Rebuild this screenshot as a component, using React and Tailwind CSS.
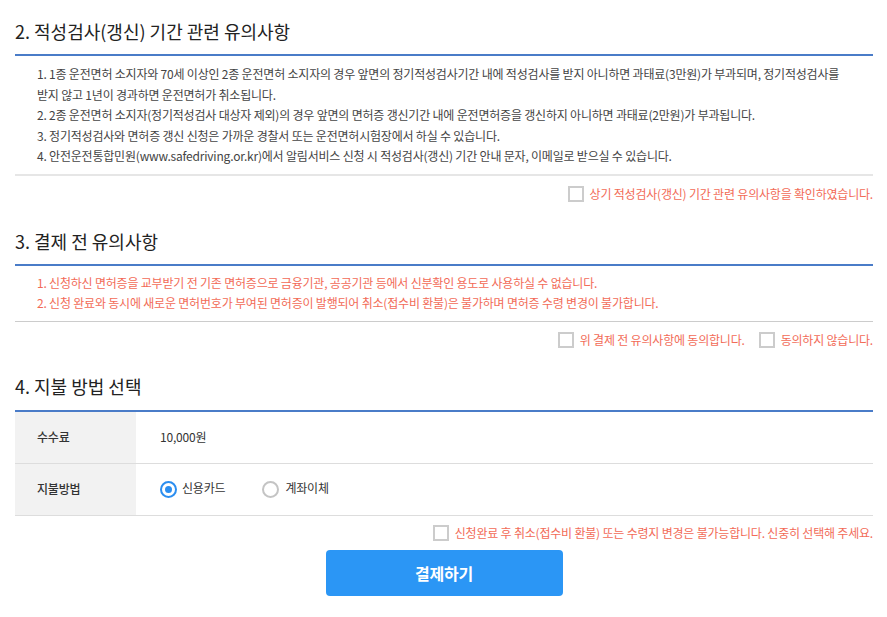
import React from "react";

const font = { fontFamily: '"Noto Sans CJK KR", "Noto Sans", sans-serif' };

function Checkbox() {
  return <span className="inline-block w-[16px] h-[16px] border-2 border-[#cccccc] bg-white shrink-0" />;
}

function Heading({ children, pt, pb }) {
  return (
    <div className={`${pt} ${pb} border-b-2 border-[#4a7cc8]`}>
      <h2 className="text-[18px] leading-[22px] text-[#222] font-normal tracking-normal">{children}</h2>
    </div>
  );
}

export default function App() {
  return (
    <div className="bg-white w-[887px] h-[617px] overflow-hidden tracking-[-0.2px]" style={font}>
      <div className="ml-[15px] w-[858px]">
        <Heading pt="pt-[20px]" pb="pb-[12px]">2. 적성검사(갱신) 기간 관련 유의사항</Heading>
        <ul className="pl-[22px] pt-[8px] pb-[7px] border-b-2 border-[#e6e6e6] text-[12px] leading-[20.5px] text-[#444]">
          <li>1. 1종 운전면허 소지자와 70세 이상인 2종 운전면허 소지자의 경우 앞면의 정기적성검사기간 내에 적성검사를 받지 아니하면 과태료(3만원)가 부과되며, 정기적성검사를<br />받지 않고 1년이 경과하면 운전면허가 취소됩니다.</li>
          <li>2. 2종 운전면허 소지자(정기적성검사 대상자 제외)의 경우 앞면의 면허증 갱신기간 내에 운전면허증을 갱신하지 아니하면 과태료(2만원)가 부과됩니다.</li>
          <li>3. 정기적성검사와 면허증 갱신 신청은 가까운 경찰서 또는 운전면허시험장에서 하실 수 있습니다.</li>
          <li>4. 안전운전통합민원(www.safedriving.or.kr)에서 알림서비스 신청 시 적성검사(갱신) 기간 안내 문자, 이메일로 받으실 수 있습니다.</li>
        </ul>
        <div className="h-[36px] flex items-center justify-end gap-[6px] text-[12px] text-[#f26b57]">
          <Checkbox />
          <span>상기 적성검사(갱신) 기간 관련 유의사항을 확인하였습니다.</span>
        </div>

        <Heading pt="pt-[18px]" pb="pb-[12px]">3. 결제 전 유의사항</Heading>
        <ul className="pl-[22px] pt-[7px] pb-[8px] border-b border-[#cccccc] text-[12px] leading-[20px] text-[#f26b57]">
          <li>1. 신청하신 면허증을 교부받기 전 기존 면허증으로 금융기관, 공공기관 등에서 신분확인 용도로 사용하실 수 없습니다.</li>
          <li>2. 신청 완료와 동시에 새로운 면허번호가 부여된 면허증이 발행되어 취소(접수비 환불)은 불가하며 면허증 수령 변경이 불가합니다.</li>
        </ul>
        <div className="h-[36px] flex items-center justify-end text-[12px] text-[#f26b57]">
          <Checkbox />
          <span className="ml-[6px]">위 결제 전 유의사항에 동의합니다.</span>
          <span className="ml-[14px] flex"><Checkbox /></span>
          <span className="ml-[6px]">동의하지 않습니다.</span>
        </div>

        <Heading pt="pt-[17px]" pb="pb-[13px]">4. 지불 방법 선택</Heading>
        <div className="text-[12px] text-[#333]">
          <div className="flex h-[52px] border-b border-[#dddddd]">
            <div className="w-[121px] bg-[#f2f2f2] flex items-center pl-[22px] font-medium">수수료</div>
            <div className="flex items-center pl-[24px]">10,000원</div>
          </div>
          <div className="flex h-[52px] border-b border-[#dddddd]">
            <div className="w-[121px] bg-[#f2f2f2] flex items-center pl-[22px] font-medium">지불방법</div>
            <div className="flex items-center pl-[24px]">
              <span className="w-[17px] h-[17px] rounded-full border-2 border-[#2b8ef0] flex items-center justify-center">
                <span className="w-[7px] h-[7px] rounded-full bg-[#2b8ef0]" />
              </span>
              <span className="ml-[5px] -mt-[3px]">신용카드</span>
              <span className="ml-[37px] w-[17px] h-[17px] rounded-full border-2 border-[#c4c4c4]" />
              <span className="ml-[6px] -mt-[3px]">계좌이체</span>
            </div>
          </div>
        </div>
        <div className="h-[34px] flex items-center justify-end gap-[6px] text-[12px] text-[#f26b57]">
          <Checkbox />
          <span>신청완료 후 취소(접수비 환불) 또는 수령지 변경은 불가능합니다. 신중히 선택해 주세요.</span>
        </div>
        <div className="flex justify-center">
          <button className="w-[237px] h-[46px] rounded-[4px] bg-[#2b96f5] text-white text-[16px] font-bold">결제하기</button>
        </div>
      </div>
    </div>
  );
}
